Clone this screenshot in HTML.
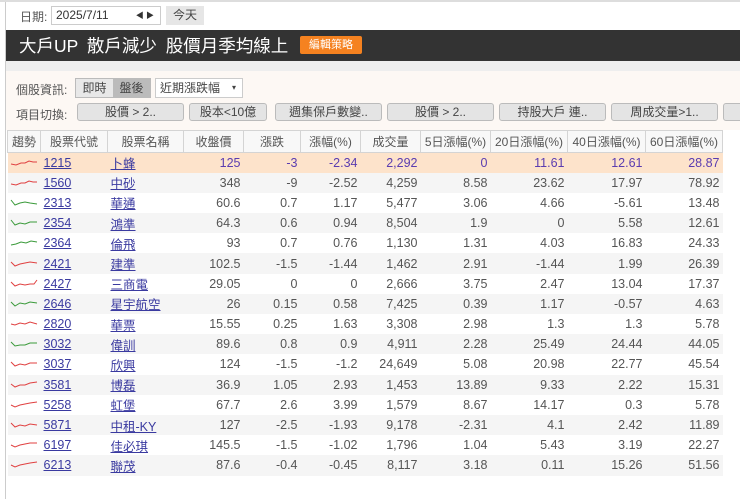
<!DOCTYPE html><html><head><meta charset="utf-8"><style>
*{margin:0;padding:0;box-sizing:border-box}
body{width:740px;height:499px;overflow:hidden;background:#fff;font-family:"Liberation Sans","Noto Sans CJK TC",sans-serif;font-size:12px;color:#444;position:relative}
.abs{position:absolute}
.btn{position:absolute;top:103px;height:18px;background:#e4e4e4;border:1px solid #bbb;border-radius:3px;text-align:center;line-height:16px;font-size:12px;color:#444}
table{position:absolute;left:7px;top:130px;border-collapse:collapse;font-size:12.5px}
th{height:22px;font-weight:normal;color:#555;border:1px solid #d4d4d4;background:#f8f8f8;text-align:center;padding:0;font-size:12px}
td{height:20.2px;padding:0 3px;text-align:right;color:#555}
tr:nth-child(odd) td{background:#f5f5f5}
tr.hl td{background:#fde3cb;color:#5a3cb0}
td.c{text-align:left;padding-left:3px}
td a{color:#3a3aa0;text-decoration:underline}
td.s{padding:0 2px;text-align:center}
</style></head><body>
<div class="abs" style="left:5px;top:0;width:1px;height:499px;background:#ccc"></div>
<div class="abs" style="left:0;top:0;width:740px;height:2px;background:#ddd"></div>
<div class="abs" style="left:20px;top:8px;font-size:12px;color:#555">日期:</div>
<div class="abs" style="left:51px;top:6px;width:110px;height:19px;border:1px solid #ccc;background:#fff;padding-left:4px;line-height:17px;font-size:12px;color:#333">2025/7/11<span style="position:absolute;right:6px;font-size:8px">◀ ▶</span></div>
<div class="abs" style="left:166px;top:6px;width:38px;height:19px;background:#e6e6e6;text-align:center;line-height:19px;color:#444">今天</div>
<div class="abs" style="left:6px;top:30px;width:734px;height:31px;background:#333"></div>
<div class="abs" style="left:19px;top:33px;font-size:17.5px;color:#fff;line-height:26px;word-spacing:4px">大戶UP 散戶減少 股價月季均線上</div>
<div class="abs" style="left:300px;top:36px;width:62px;height:18px;background:#f58220;color:#fff;font-size:11px;text-align:center;line-height:18px;border-radius:2px">編輯策略</div>
<div class="abs" style="left:6px;top:61px;width:734px;height:10px;background:#eee"></div>
<div class="abs" style="left:6px;top:71px;width:734px;height:59px;background:#fdf8f4"></div>
<div class="abs" style="left:16px;top:81px;color:#555">個股資訊:</div>
<div class="abs" style="left:75px;top:78px;width:76px;height:20px;border:1px solid #bbb;background:#e8e8e8"><span style="position:absolute;left:0;width:37px;text-align:center;line-height:18px">即時</span><span style="position:absolute;left:37px;width:37px;height:18px;background:#bbb;text-align:center;line-height:18px">盤後</span></div>
<div class="abs" style="left:155px;top:78px;width:88px;height:20px;border:1px solid #ccc;background:#fff;padding-left:4px;line-height:18px">近期漲跌幅<span style="position:absolute;right:6px;font-size:8px">▾</span></div>
<div class="abs" style="left:16px;top:106px;color:#555">項目切換:</div>
<div class="btn" style="left:77px;width:107px">股價 &gt; 2..</div>
<div class="btn" style="left:189px;width:78px">股本&lt;10億</div>
<div class="btn" style="left:275px;width:107px">週集保戶數變..</div>
<div class="btn" style="left:387px;width:107px">股價 &gt; 2..</div>
<div class="btn" style="left:499px;width:107px">持股大戶 連..</div>
<div class="btn" style="left:611px;width:107px">周成交量&gt;1..</div>
<div class="btn" style="left:723px;width:30px"></div>
<table>
<tr><th style="width:33px">趨勢</th><th style="width:67px">股票代號</th><th style="width:76px">股票名稱</th><th style="width:60px">收盤價</th><th style="width:57px">漲跌</th><th style="width:60px">漲幅(%)</th><th style="width:60px">成交量</th><th style="width:70px">5日漲幅(%)</th><th style="width:77px">20日漲幅(%)</th><th style="width:78px">40日漲幅(%)</th><th style="width:77px">60日漲幅(%)</th></tr>
<tr class="hl"><td class="s"><svg width="28" height="10"><polyline points="1,7 6,8 11,6 15,6 19,4 23,5 27,5" fill="none" stroke="#e04040"/></svg></td><td class="c"><a>1215</a></td><td class="c"><a>卜蜂</a></td><td>125</td><td>-3</td><td>-2.34</td><td>2,292</td><td>0</td><td>11.61</td><td>12.61</td><td>28.87</td></tr>
<tr><td class="s"><svg width="28" height="10"><polyline points="1,7 6,8 11,6 15,6 19,4 23,5 27,5" fill="none" stroke="#e04040"/></svg></td><td class="c"><a>1560</a></td><td class="c"><a>中砂</a></td><td>348</td><td>-9</td><td>-2.52</td><td>4,259</td><td>8.58</td><td>23.62</td><td>17.97</td><td>78.92</td></tr>
<tr><td class="s"><svg width="28" height="10"><polyline points="1,3 5,8 10,6 15,5 20,6 27,7" fill="none" stroke="#3a9a3a"/></svg></td><td class="c"><a>2313</a></td><td class="c"><a>華通</a></td><td>60.6</td><td>0.7</td><td>1.17</td><td>5,477</td><td>3.06</td><td>4.66</td><td>-5.61</td><td>13.48</td></tr>
<tr><td class="s"><svg width="28" height="10"><polyline points="1,3 5,8 10,6 15,7 20,5 27,5" fill="none" stroke="#3a9a3a"/></svg></td><td class="c"><a>2354</a></td><td class="c"><a>鴻準</a></td><td>64.3</td><td>0.6</td><td>0.94</td><td>8,504</td><td>1.9</td><td>0</td><td>5.58</td><td>12.61</td></tr>
<tr><td class="s"><svg width="28" height="10"><polyline points="1,8 6,7 11,5 16,6 21,4 27,5" fill="none" stroke="#3a9a3a"/></svg></td><td class="c"><a>2364</a></td><td class="c"><a>倫飛</a></td><td>93</td><td>0.7</td><td>0.76</td><td>1,130</td><td>1.31</td><td>4.03</td><td>16.83</td><td>24.33</td></tr>
<tr><td class="s"><svg width="28" height="10"><polyline points="1,4 5,8 10,6 15,5 20,4 27,5" fill="none" stroke="#e04040"/></svg></td><td class="c"><a>2421</a></td><td class="c"><a>建準</a></td><td>102.5</td><td>-1.5</td><td>-1.44</td><td>1,462</td><td>2.91</td><td>-1.44</td><td>1.99</td><td>26.39</td></tr>
<tr><td class="s"><svg width="28" height="10"><polyline points="1,4 5,8 10,6 15,7 20,6 24,6 27,2" fill="none" stroke="#e04040"/></svg></td><td class="c"><a>2427</a></td><td class="c"><a>三商電</a></td><td>29.05</td><td>0</td><td>0</td><td>2,666</td><td>3.75</td><td>2.47</td><td>13.04</td><td>17.37</td></tr>
<tr><td class="s"><svg width="28" height="10"><polyline points="1,4 5,8 10,5 15,6 20,4 27,5" fill="none" stroke="#3a9a3a"/></svg></td><td class="c"><a>2646</a></td><td class="c"><a>星宇航空</a></td><td>26</td><td>0.15</td><td>0.58</td><td>7,425</td><td>0.39</td><td>1.17</td><td>-0.57</td><td>4.63</td></tr>
<tr><td class="s"><svg width="28" height="10"><polyline points="1,6 5,7 10,5 15,6 20,4 27,6" fill="none" stroke="#e04040"/></svg></td><td class="c"><a>2820</a></td><td class="c"><a>華票</a></td><td>15.55</td><td>0.25</td><td>1.63</td><td>3,308</td><td>2.98</td><td>1.3</td><td>1.3</td><td>5.78</td></tr>
<tr><td class="s"><svg width="28" height="10"><polyline points="1,4 5,8 10,7 15,7 20,5 27,5" fill="none" stroke="#3a9a3a"/></svg></td><td class="c"><a>3032</a></td><td class="c"><a>偉訓</a></td><td>89.6</td><td>0.8</td><td>0.9</td><td>4,911</td><td>2.28</td><td>25.49</td><td>24.44</td><td>44.05</td></tr>
<tr><td class="s"><svg width="28" height="10"><polyline points="1,4 5,8 10,6 15,7 20,5 27,5" fill="none" stroke="#e04040"/></svg></td><td class="c"><a>3037</a></td><td class="c"><a>欣興</a></td><td>124</td><td>-1.5</td><td>-1.2</td><td>24,649</td><td>5.08</td><td>20.98</td><td>22.77</td><td>45.54</td></tr>
<tr><td class="s"><svg width="28" height="10"><polyline points="1,5 5,8 10,6 15,6 20,4 27,3" fill="none" stroke="#e04040"/></svg></td><td class="c"><a>3581</a></td><td class="c"><a>博磊</a></td><td>36.9</td><td>1.05</td><td>2.93</td><td>1,453</td><td>13.89</td><td>9.33</td><td>2.22</td><td>15.31</td></tr>
<tr><td class="s"><svg width="28" height="10"><polyline points="1,6 5,8 10,6 15,5 20,4 27,3" fill="none" stroke="#e04040"/></svg></td><td class="c"><a>5258</a></td><td class="c"><a>虹堡</a></td><td>67.7</td><td>2.6</td><td>3.99</td><td>1,579</td><td>8.67</td><td>14.17</td><td>0.3</td><td>5.78</td></tr>
<tr><td class="s"><svg width="28" height="10"><polyline points="1,4 5,8 10,6 15,7 20,5 27,6" fill="none" stroke="#e04040"/></svg></td><td class="c"><a>5871</a></td><td class="c"><a>中租-KY</a></td><td>127</td><td>-2.5</td><td>-1.93</td><td>9,178</td><td>-2.31</td><td>4.1</td><td>2.42</td><td>11.89</td></tr>
<tr><td class="s"><svg width="28" height="10"><polyline points="1,6 5,8 10,6 15,5 20,4 27,4" fill="none" stroke="#e04040"/></svg></td><td class="c"><a>6197</a></td><td class="c"><a>佳必琪</a></td><td>145.5</td><td>-1.5</td><td>-1.02</td><td>1,796</td><td>1.04</td><td>5.43</td><td>3.19</td><td>22.27</td></tr>
<tr><td class="s"><svg width="28" height="10"><polyline points="1,6 5,8 10,6 15,5 20,4 27,3" fill="none" stroke="#e04040"/></svg></td><td class="c"><a>6213</a></td><td class="c"><a>聯茂</a></td><td>87.6</td><td>-0.4</td><td>-0.45</td><td>8,117</td><td>3.18</td><td>0.11</td><td>15.26</td><td>51.56</td></tr>
</table>
</body></html>
